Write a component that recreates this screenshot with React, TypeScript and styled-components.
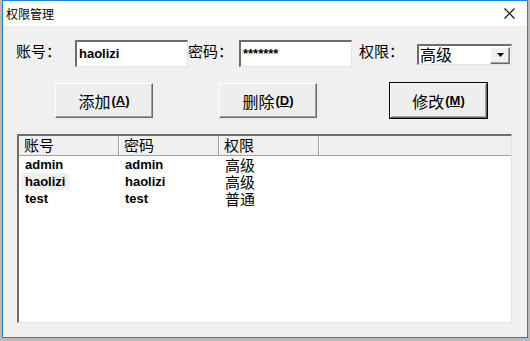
import styled, { createGlobalStyle } from 'styled-components'

const GlobalStyle = createGlobalStyle`
  html, body {
    margin: 0;
    padding: 0;
    background: #b9b9b9;
    width: 530px;
    height: 341px;
    overflow: hidden;
  }
`

const cjk = `'Noto Sans CJK SC', 'Noto Sans', sans-serif`
const latin = `'Liberation Sans', Arial, sans-serif`

const users = [
  { name: 'admin', pwd: 'admin', role: '高级' },
  { name: 'haolizi', pwd: 'haolizi', role: '高级', selected: true },
  { name: 'test', pwd: 'test', role: '普通' },
]

export default function App() {
  return (
    <>
      <GlobalStyle />
      <Window>
        <TitleBar>
          <Title>权限管理</Title>
          <Close>
            <svg width="11" height="11" viewBox="0 0 11 11">
              <path d="M0.5 0.5 L10.5 10.5 M10.5 0.5 L0.5 10.5" stroke="#000" strokeWidth="1.1" />
            </svg>
          </Close>
        </TitleBar>
        <Body>
          <FormRow>
            <Label $w={59}>账号：</Label>
            <Field $w={113}>haolizi</Field>
            <Label $w={51}>密码：</Label>
            <Field $w={113}>*******</Field>
            <Label $w={58} $ml={7}>权限：</Label>
            <Select>
              <SelectText>高级</SelectText>
              <DropButton>
                <svg width="7" height="4" viewBox="0 0 7 4">
                  <path d="M0 0 H7 L3.5 4 Z" fill="#000" />
                </svg>
              </DropButton>
            </Select>
          </FormRow>
          <ButtonRow>
            <Button $ml={52} $w={98}>
              添加<Key>(<u>A</u>)</Key>
            </Button>
            <Button $ml={66} $w={98}>
              删除<Key>(<u>D</u>)</Key>
            </Button>
            <Button $ml={73} $w={97} $default>
              修改<Key>(<u>M</u>)</Key>
            </Button>
          </ButtonRow>
          <ListView>
            <Header>
              <HeadCell $w={100}>账号</HeadCell>
              <HeadCell $w={100}>密码</HeadCell>
              <HeadCell $w={100}>权限</HeadCell>
              <HeadFill />
            </Header>
            {users.map((u) => (
              <Row key={u.name}>
                <Cell $w={100}>
                  <NameText $selected={u.selected}>{u.name}</NameText>
                </Cell>
                <Cell $w={100}>
                  <NameText>{u.pwd}</NameText>
                </Cell>
                <Cell $w={100} $cjk>
                  {u.role}
                </Cell>
              </Row>
            ))}
          </ListView>
        </Body>
      </Window>
    </>
  )
}

const Window = styled.div`
  margin-left: 2px;
  width: 526px;
  height: 338px;
  box-sizing: border-box;
  border: 1px solid #1883d7;
  background: #f0f0f0;
  display: flex;
  flex-direction: column;
`

const TitleBar = styled.div`
  height: 25px;
  background: #fff;
  display: flex;
  align-items: center;
  justify-content: space-between;
  padding: 0 12px 0 3px;
`

const Title = styled.span`
  font-family: ${cjk};
  font-size: 12px;
  color: #000;
`

const Close = styled.span`
  display: flex;
  align-items: center;
`

const Body = styled.div`
  flex: 1;
  display: flex;
  flex-direction: column;
`

const FormRow = styled.div`
  display: flex;
  align-items: center;
  margin-top: 14px;
  padding-left: 13px;
  height: 27px;
`

const Label = styled.span<{ $w: number; $ml?: number }>`
  width: ${(p) => p.$w}px;
  margin-left: ${(p) => p.$ml ?? 0}px;
  font-family: ${cjk};
  font-size: 15px;
  line-height: 27px;
  margin-top: -6px;
  color: #000;
  flex-shrink: 0;
`

const Field = styled.div<{ $w: number }>`
  width: ${(p) => p.$w}px;
  height: 27px;
  box-sizing: border-box;
  background: #fff;
  border-top: 2px solid #6d6d6d;
  border-left: 2px solid #6d6d6d;
  border-right: 1px solid #e3e3e3;
  border-bottom: 1px solid #e3e3e3;
  padding: 4px 0 0 2px;
  font-family: ${latin};
  font-weight: bold;
  font-size: 13px;
  color: #000;
  flex-shrink: 0;
`

const Select = styled.div`
  width: 95px;
  height: 21px;
  box-sizing: border-box;
  background: #fff;
  border-top: 2px solid #6d6d6d;
  border-left: 2px solid #6d6d6d;
  border-right: 1px solid #e3e3e3;
  border-bottom: 1px solid #e3e3e3;
  display: flex;
  align-items: center;
  justify-content: space-between;
  padding-right: 1px;
  margin-top: 2px;
`

const SelectText = styled.span`
  font-family: ${cjk};
  font-size: 16px;
  line-height: 17px;
  padding-left: 1px;
  margin-top: -1px;
  color: #000;
`

const DropButton = styled.span`
  width: 20px;
  height: 17px;
  box-sizing: border-box;
  background: #f0f0f0;
  border-top: 1px solid #fff;
  border-left: 1px solid #fff;
  border-right: 1px solid #6d6d6d;
  border-bottom: 1px solid #6d6d6d;
  box-shadow: inset -1px -1px 0 #a0a0a0;
  display: flex;
  align-items: center;
  justify-content: center;
`

const ButtonRow = styled.div`
  display: flex;
  margin-top: 16px;
  height: 35px;
`

const Button = styled.div<{ $ml: number; $w: number; $default?: boolean }>`
  margin-left: ${(p) => p.$ml}px;
  width: ${(p) => p.$w}px;
  height: 35px;
  box-sizing: border-box;
  background: #eeeeee;
  border-top: 1px solid #fff;
  border-left: 1px solid #fff;
  border-right: 1px solid #696969;
  border-bottom: 1px solid #696969;
  box-shadow: inset -1px -1px 0 #a0a0a0;
  outline: ${(p) => (p.$default ? '1px solid #000' : 'none')};
  display: flex;
  align-items: center;
  justify-content: center;
  font-family: ${cjk};
  font-size: 16px;
  color: #000;
`

const Key = styled.span`
  font-family: ${latin};
  font-weight: bold;
  font-size: 13px;
  margin-left: 1px;
`

const ListView = styled.div`
  margin: 16px 0 0 14px;
  width: 495px;
  height: 189px;
  box-sizing: border-box;
  background: #fff;
  border-top: 2px solid #6d6d6d;
  border-left: 2px solid #6d6d6d;
  border-right: 1px solid #e3e3e3;
  border-bottom: 1px solid #e3e3e3;
  display: flex;
  flex-direction: column;
`

const Header = styled.div`
  display: flex;
  height: 19px;
  background: #f0f0f0;
  border-bottom: 1px solid #a0a0a0;
`

const HeadCell = styled.div<{ $w: number }>`
  width: ${(p) => p.$w}px;
  box-sizing: border-box;
  border-right: 1px solid #a0a0a0;
  box-shadow: 1px 0 0 #fff;
  padding-left: 5px;
  font-family: ${cjk};
  font-size: 15px;
  line-height: 18px;
  color: #000;
`

const HeadFill = styled.div`
  flex: 1;
  margin-left: 1px;
`

const Row = styled.div`
  display: flex;
  height: 17px;
`

const Cell = styled.div<{ $w: number; $cjk?: boolean }>`
  width: ${(p) => p.$w}px;
  padding-left: ${(p) => (p.$cjk ? 6 : 2)}px;
  box-sizing: border-box;
  font-family: ${(p) => (p.$cjk ? cjk : latin)};
  font-size: ${(p) => (p.$cjk ? '15px' : '13px')};
  line-height: 17px;
  color: #000;
  white-space: nowrap;
`

const NameText = styled.span<{ $selected?: boolean }>`
  display: inline-block;
  font-weight: bold;
  padding: 0 4px;
  height: 17px;
  background: ${(p) => (p.$selected ? '#f0f0f0' : 'transparent')};
`
